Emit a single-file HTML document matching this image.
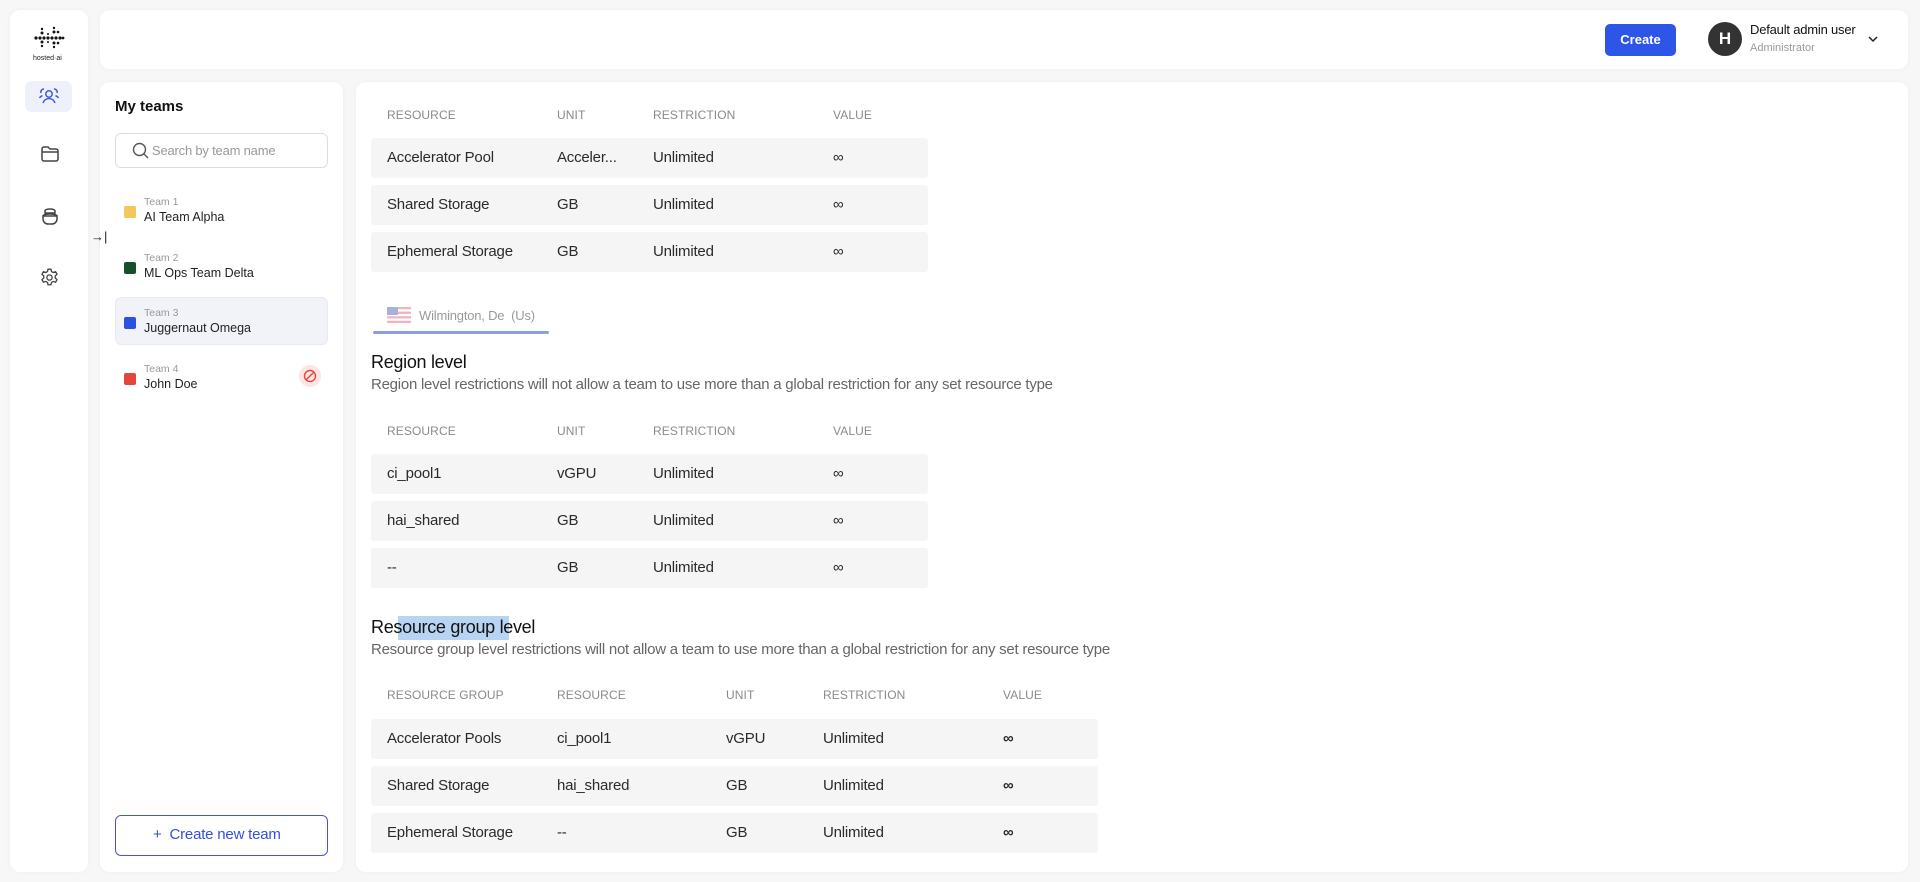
<!DOCTYPE html>
<html><head><meta charset="utf-8"><style>
*{box-sizing:border-box;margin:0;padding:0}
body{width:1920px;height:882px;background:#f7f7f8;font-family:"Liberation Sans",sans-serif;color:#1f1f1f;position:relative;overflow:hidden}
.card{position:absolute;background:#fff;border-radius:10px;box-shadow:0 0 6px rgba(0,0,0,.04)}
.abs{position:absolute;white-space:nowrap}
.th{position:absolute;font-size:12px;color:#8a8a8a;letter-spacing:.1px}
.row{position:absolute;background:#f5f5f5;border-radius:3px;height:40px}
.row span{position:absolute;top:11px;font-size:15px;color:#2a2a2a;white-space:nowrap;letter-spacing:-.2px}
.team{position:absolute;left:115px;width:213px;height:48px}
.team .sq{position:absolute;left:9px;top:20px;width:12px;height:12px;border-radius:2px}
.team .l{position:absolute;left:29px;top:10px;font-size:10.5px;color:#999}
.team .n{position:absolute;left:29px;top:24px;font-size:12.5px;color:#1f1f1f}
</style></head><body>
<div class="card" style="left:10px;top:10px;width:78px;height:862px"></div>
<div class="card" style="left:100px;top:10px;width:1808px;height:59px"></div>
<div class="card" style="left:100px;top:82px;width:243px;height:790px"></div>
<div class="card" style="left:356px;top:82px;width:1552px;height:790px"></div>

<svg class="abs" style="left:33px;top:26px" width="32" height="26" viewBox="0 0 32 26">
<g fill="#111">
<circle cx="3" cy="12" r="1.6"/><circle cx="7" cy="12" r="1.6"/><circle cx="11" cy="12" r="1.6"/><circle cx="15" cy="12" r="1.6"/><circle cx="19" cy="12" r="1.6"/><circle cx="23" cy="12" r="1.6"/><circle cx="27" cy="12" r="1.6"/><circle cx="30" cy="12" r="1.4"/>
<circle cx="9" cy="3" r="1.2"/><circle cx="9" cy="7" r="1.5"/><circle cx="9" cy="16" r="1.5"/><circle cx="9" cy="20" r="1.2"/>
<circle cx="21" cy="2" r="1.2"/><circle cx="21" cy="6" r="1.5"/><circle cx="21" cy="17" r="1.5"/><circle cx="21" cy="21" r="1.2"/>
<circle cx="25" cy="6" r="1.3"/><circle cx="25" cy="17" r="1.3"/><circle cx="15" cy="8" r="1"/><circle cx="15" cy="16" r="1"/>
</g></svg>
<div class="abs" style="left:33px;top:55px;font-size:7px;color:#222">hosted·ai</div>

<div class="abs" style="left:25px;top:81px;width:47px;height:31px;background:#eef0fb;border-radius:7px"></div>
<svg class="abs" style="left:38px;top:86px" width="22" height="20" viewBox="0 0 22 20" fill="none" stroke="#4358d9" stroke-width="1.5"><circle cx="11" cy="8" r="3.2"/><path d="M5 17c1-3 3.5-4.5 6-4.5s5 1.5 6 4.5M3 7a3 3 0 0 1 3-4M19 7a3 3 0 0 0-3-4M1.5 12c.7-1.2 1.8-2 3-2.2M20.5 12c-.7-1.2-1.8-2-3-2.2"/></svg>
<svg class="abs" style="left:40px;top:145px" width="20" height="18" viewBox="0 0 20 18" fill="none" stroke="#444" stroke-width="1.5"><path d="M2 4a2 2 0 0 1 2-2h4l2 2h6a2 2 0 0 1 2 2v8a2 2 0 0 1-2 2H4a2 2 0 0 1-2-2z M2 7h16"/></svg>
<svg class="abs" style="left:40px;top:206px" width="20" height="20" viewBox="0 0 20 20" fill="none" stroke="#444" stroke-width="1.5"><path d="M5 5a5 2 0 0 1 10 0v2H5z M3 10h14v3a5 5 0 0 1-5 5H8a5 5 0 0 1-5-5z M3 10a7 2 0 0 1 14 0"/></svg>
<svg class="abs" style="left:39px;top:267px" width="21" height="21" viewBox="0 0 24 24" fill="none" stroke="#444" stroke-width="1.5"><circle cx="12" cy="12" r="3"/><path d="M10.3 2.5h3.4l.6 2.7 2 1.1 2.6-.9 1.7 2.9-2 1.9v2.4l2 1.9-1.7 2.9-2.6-.9-2 1.1-.6 2.7h-3.4l-.6-2.7-2-1.1-2.6.9-1.7-2.9 2-1.9v-2.4l-2-1.9 1.7-2.9 2.6.9 2-1.1z"/></svg>
<div class="abs" style="left:91px;top:229px;font-size:13px;color:#222">→|</div>

<div class="abs" style="left:115px;top:98px;font-size:15px;font-weight:bold;color:#111">My teams</div>
<div class="abs" style="left:115px;top:133px;width:213px;height:35px;border:1px solid #ddd;border-radius:6px"></div>
<svg class="abs" style="left:132px;top:142px" width="17" height="17" viewBox="0 0 17 17" fill="none" stroke="#555" stroke-width="1.4"><circle cx="7.5" cy="7.5" r="6"/><path d="M12 12l4 4"/></svg>
<div class="abs" style="left:152px;top:143px;font-size:13px;color:#999;letter-spacing:-.2px">Search by team name</div>

<div class="team" style="top:186px"><div class="sq" style="background:#f2c75c"></div><div class="l">Team 1</div><div class="n">AI Team Alpha</div></div>
<div class="team" style="top:242px"><div class="sq" style="background:#16502a"></div><div class="l">Team 2</div><div class="n">ML Ops Team Delta</div></div>
<div class="team" style="top:297px;background:#f1f3f9;border:1px solid #e8eaf1;border-radius:6px"><div class="sq" style="background:#2c50e0;left:8px;top:19px"></div><div class="l" style="left:28px;top:9px">Team 3</div><div class="n" style="left:28px;top:23px">Juggernaut Omega</div></div>
<div class="team" style="top:353px"><div class="sq" style="background:#e2463d"></div><div class="l">Team 4</div><div class="n">John Doe</div></div>
<div class="abs" style="left:299px;top:365px;width:22px;height:22px;border-radius:50%;background:#fde5e5"></div>
<svg class="abs" style="left:303px;top:369px" width="14" height="14" viewBox="0 0 14 14" fill="none" stroke="#e2463d" stroke-width="1.4"><circle cx="7" cy="7" r="5.5"/><path d="M3.2 10.8l7.6-7.6"/></svg>

<div class="abs" style="left:115px;top:815px;width:213px;height:41px;border:1px solid #4358d9;border-radius:6px"></div>
<div class="abs" style="left:153px;top:826px;font-size:15px;color:#3450d8;letter-spacing:-.2px">+&nbsp; Create new team</div>

<div class="abs" style="left:1605px;top:24px;width:71px;height:32px;background:#2d55e8;border-radius:5px;color:#fff;font-size:13px;font-weight:bold;text-align:center;line-height:32px">Create</div>
<div class="abs" style="left:1708px;top:22px;width:34px;height:34px;border-radius:50%;background:#333;color:#fff;font-size:17px;font-weight:bold;text-align:center;line-height:34px">H</div>
<div class="abs" style="left:1750px;top:22px;font-size:13px;color:#111;letter-spacing:-.2px">Default admin user</div>
<div class="abs" style="left:1750px;top:42px;font-size:11px;color:#999">Administrator</div>
<svg class="abs" style="left:1867px;top:35px" width="12" height="8" viewBox="0 0 12 8" fill="none" stroke="#222" stroke-width="1.5"><path d="M2 2l4 4 4-4"/></svg>

<div class="th" style="left:387px;top:108px">RESOURCE</div><div class="th" style="left:557px;top:108px">UNIT</div><div class="th" style="left:653px;top:108px">RESTRICTION</div><div class="th" style="left:833px;top:108px">VALUE</div>
<div class="row" style="left:371px;top:138px;width:557px"><span style="left:16px">Accelerator Pool</span><span style="left:186px">Acceler...</span><span style="left:282px">Unlimited</span><span style="left:462px">∞</span></div>
<div class="row" style="left:371px;top:185px;width:557px"><span style="left:16px">Shared Storage</span><span style="left:186px">GB</span><span style="left:282px">Unlimited</span><span style="left:462px">∞</span></div>
<div class="row" style="left:371px;top:232px;width:557px"><span style="left:16px">Ephemeral Storage</span><span style="left:186px">GB</span><span style="left:282px">Unlimited</span><span style="left:462px">∞</span></div>

<svg class="abs" style="left:387px;top:307px" width="24" height="16" viewBox="0 0 24 16"><rect width="24" height="16" fill="#f2b3bd"/><g fill="#fff"><rect y="2.3" width="24" height="2.3"/><rect y="6.9" width="24" height="2.3"/><rect y="11.5" width="24" height="2.3"/></g><rect width="11" height="8" fill="#a9b0dd"/></svg>
<div class="abs" style="left:419px;top:308px;font-size:13px;color:#999;letter-spacing:-.2px">Wilmington, De &nbsp;(Us)</div>
<div class="abs" style="left:373px;top:331px;width:176px;height:3px;background:#8d9ce6;border-radius:2px"></div>

<div class="abs" style="left:371px;top:352px;font-size:18px;color:#111;letter-spacing:-.3px">Region level</div>
<div class="abs" style="left:371px;top:376px;font-size:15px;color:#666;letter-spacing:-.25px">Region level restrictions will not allow a team to use more than a global restriction for any set resource type</div>

<div class="th" style="left:387px;top:424px">RESOURCE</div><div class="th" style="left:557px;top:424px">UNIT</div><div class="th" style="left:653px;top:424px">RESTRICTION</div><div class="th" style="left:833px;top:424px">VALUE</div>
<div class="row" style="left:371px;top:454px;width:557px"><span style="left:16px">ci_pool1</span><span style="left:186px">vGPU</span><span style="left:282px">Unlimited</span><span style="left:462px">∞</span></div>
<div class="row" style="left:371px;top:501px;width:557px"><span style="left:16px">hai_shared</span><span style="left:186px">GB</span><span style="left:282px">Unlimited</span><span style="left:462px">∞</span></div>
<div class="row" style="left:371px;top:548px;width:557px"><span style="left:16px">--</span><span style="left:186px">GB</span><span style="left:282px">Unlimited</span><span style="left:462px">∞</span></div>

<div class="abs" style="left:398px;top:616px;width:111px;height:24px;background:#b9d4f2"></div>
<div class="abs" style="left:371px;top:617px;font-size:18px;color:#111;letter-spacing:-.3px">Resource group level</div>
<div class="abs" style="left:371px;top:641px;font-size:15px;color:#666;letter-spacing:-.25px">Resource group level restrictions will not allow a team to use more than a global restriction for any set resource type</div>

<div class="th" style="left:387px;top:688px">RESOURCE GROUP</div><div class="th" style="left:557px;top:688px">RESOURCE</div><div class="th" style="left:726px;top:688px">UNIT</div><div class="th" style="left:823px;top:688px">RESTRICTION</div><div class="th" style="left:1003px;top:688px">VALUE</div>
<div class="row" style="left:371px;top:719px;width:727px"><span style="left:16px">Accelerator Pools</span><span style="left:186px">ci_pool1</span><span style="left:355px">vGPU</span><span style="left:452px">Unlimited</span><span style="left:632px;font-weight:bold">∞</span></div>
<div class="row" style="left:371px;top:766px;width:727px"><span style="left:16px">Shared Storage</span><span style="left:186px">hai_shared</span><span style="left:355px">GB</span><span style="left:452px">Unlimited</span><span style="left:632px;font-weight:bold">∞</span></div>
<div class="row" style="left:371px;top:813px;width:727px"><span style="left:16px">Ephemeral Storage</span><span style="left:186px">--</span><span style="left:355px">GB</span><span style="left:452px">Unlimited</span><span style="left:632px;font-weight:bold">∞</span></div>
</body></html>
